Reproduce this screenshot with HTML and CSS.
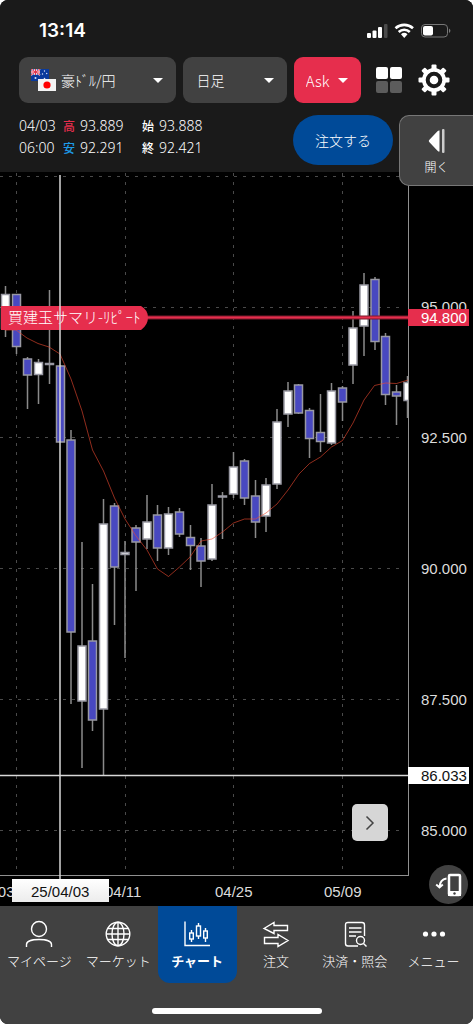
FILE: index.html
```html
<!DOCTYPE html>
<html lang="ja">
<head>
<meta charset="utf-8">
<meta name="viewport" content="width=device-width, initial-scale=1">
<title>チャート</title>
<link rel="stylesheet" href="styles.css">
</head>
<body>
<div class="app">
  <header class="header">
    <div class="status">
      <span class="time">13:14</span>
      <svg class="status-icons" viewBox="0 0 86 16" width="86" height="16" aria-hidden="true">
        <g fill="#fff">
          <rect x="1" y="10" width="4" height="5" rx="1"/>
          <rect x="6.500" y="7.500" width="4" height="7.500" rx="1"/>
          <rect x="12" y="4" width="4" height="11" rx="1"/>
          <rect x="18" y="1" width="3.500" height="14" rx="1" fill="#4b4b4b"/>
        </g>
        <g fill="none" stroke="#fff" stroke-width="2.600">
          <path d="M29.500 5.300a13 13 0 0 1 17.500 0"/>
          <path d="M32.700 9a8 8 0 0 1 11.100 0"/>
        </g>
        <path d="M35 11.200a5 5 0 0 1 6.500 0L38.250 15z" fill="#fff"/>
        <rect x="55.500" y="1.500" width="26" height="12.500" rx="3.500" fill="none" stroke="#777"/>
        <rect x="57" y="3" width="10" height="9.500" rx="2" fill="#fff"/>
        <path d="M83 5.500a2.500 2.500 0 0 1 0 4.500z" fill="#777"/>
      </svg>
    </div>
    <div class="controls">
      <div class="pick pick-pair">
        <svg class="flags" viewBox="0 0 26 23" width="26" height="23" aria-hidden="true">
          <rect width="18" height="12" fill="#0a3a9c"/>
          <path d="M0 0l9 6M9 0L0 6" stroke="#fff" stroke-width="1.600"/>
          <path d="M4.500 0v6M0 3h9" stroke="#fff" stroke-width="2.400"/>
          <path d="M4.500 0v6M0 3h9M0 0l9 6M9 0L0 6" stroke="#e03048" stroke-width="1"/>
          <g fill="#dfe6fa"><circle cx="4.500" cy="9" r="1"/><circle cx="13.500" cy="2" r=".7"/><circle cx="11.500" cy="5" r=".7"/><circle cx="15.700" cy="4.500" r=".7"/><circle cx="13.500" cy="9.500" r=".8"/></g>
          <rect x="7" y="10" width="18" height="12" fill="#f4f4f4"/>
          <circle cx="16" cy="16" r="3.600" fill="#f00"/>
        </svg>
        <select aria-label="通貨ペア"><option>豪ﾄﾞﾙ/円</option></select>
      </div>
      <div class="pick pick-span"><select aria-label="足種"><option>日足</option></select></div>
      <div class="pick pick-side"><select aria-label="レート種別"><option>Ask</option></select></div>
      <button class="icon-btn grid-btn" aria-label="分割表示">
        <svg viewBox="0 0 28 28" width="28" height="28"><g fill="#fff"><rect x="1" y="1" width="12" height="12" rx="2"/><rect x="15" y="1" width="12" height="12" rx="2"/></g><g fill="#5c5c5c"><rect x="1" y="15" width="12" height="12" rx="2"/><rect x="15" y="15" width="12" height="12" rx="2"/></g></svg>
      </button>
      <button class="icon-btn" aria-label="設定">
        <svg viewBox="-16 -16 32 32" width="32" height="32">
          <g fill="#fff">
            <g id="teeth"><rect x="-2.500" y="-15.500" width="5" height="31" rx="1"/><rect x="-15.500" y="-2.500" width="31" height="5" rx="1"/></g>
            <use href="#teeth" transform="rotate(45)"/>
            <circle r="12"/>
          </g>
          <circle r="6.300" fill="none" stroke="#1a1a1a" stroke-width="4"/>
        </svg>
      </button>
    </div>
    <div class="quote">
      <div class="ohlc">
        <span>04/03</span><b class="high">高</b><span>93.889</span><b>始</b><span>93.888</span>
        <span>06:00</span><b class="low">安</b><span>92.291</span><b>終</b><span>92.421</span>
      </div>
      <button class="order">注文する</button>
    </div>
    <button class="drawer">
      <svg viewBox="0 0 18 24" width="18" height="24" aria-hidden="true"><path d="M11.500 1.500v21q-1 .3-2-.8L1.200 13q-.9-1 0-2l8.300-8.700q1-1.100 2-.8z" fill="#fff"/><rect x="14" y="0" width="2.500" height="24" rx="1" fill="#ccc"/></svg>
      <span>開く</span>
    </button>
  </header>

  <main class="chart">
    <svg class="plot" viewBox="0 172 473 734" role="img" aria-label="豪ドル/円 日足チャート">
      <defs>
        <clipPath id="area"><rect x="0" y="172" width="408" height="704"/></clipPath>
        <linearGradient id="tag" x1="0" y1="0" x2="0" y2="1"><stop offset="0" stop-color="#fff"/><stop offset="1" stop-color="#ececec"/></linearGradient>
      </defs>
      <path class="grid" d="M0 176.500H405M0 307.500H405M0 437.500H405M0 568.500H405M0 699.500H405M0 830.500H405M16.500 173V874M125.500 173V874M233.500 173V874M342.500 173V874"/>
      <g clip-path="url(#area)">
        <path class="wick" d="M5.500 286V337M16.500 294V354M27.500 357V409M38.500 359V404M49.500 290V384M60.500 365V442M71 430V704M82 542V768M92.500 584V731M103.500 499V775M114.500 503V625M125 541V658M136 525V591M147 495V549M157.500 505V561M168.500 507V555M179.500 508V537M190.500 525V570M201 538V587M212 484V561M222.500 492V539M233.500 452V498M244.500 459V505M255.500 480V538M266 478V532M277 409V489M288 382V427M298.500 384V414M309.500 408V458M320.500 394V452M331.500 383V445M342.500 386V421M353 311V384M364 273V356M375 277V350M385.500 333V405M396.500 385V425M407.500 376V418"/>
        <g class="up">
          <rect x="1.500" y="294.500" width="8" height="34"/>
          <rect x="34.500" y="362.500" width="8" height="12"/>
          <rect x="78" y="646" width="8" height="55"/>
          <rect x="99.500" y="524" width="8" height="185"/>
          <rect x="121" y="552.500" width="8" height="2"/>
          <rect x="143" y="522" width="8" height="17"/>
          <rect x="164.500" y="514" width="8" height="34"/>
          <rect x="208" y="505" width="8" height="54"/>
          <rect x="218.500" y="496" width="8" height="1"/>
          <rect x="229.500" y="467" width="8" height="27"/>
          <rect x="262" y="485" width="8" height="31"/>
          <rect x="273" y="422" width="8" height="62"/>
          <rect x="284" y="391" width="8" height="23"/>
          <rect x="327.500" y="391" width="8" height="52"/>
          <rect x="349" y="328" width="8" height="37"/>
          <rect x="360" y="285" width="8" height="41"/>
          <rect x="404" y="382.500" width="8" height="18"/>
        </g>
        <g class="down">
          <rect x="12.500" y="294.500" width="8" height="52"/>
          <rect x="23.500" y="359" width="8" height="16"/>
          <rect x="45.500" y="363.500" width="8" height="1"/>
          <rect x="56.500" y="366" width="8" height="76"/>
          <rect x="67" y="440" width="8" height="192"/>
          <rect x="88.500" y="641" width="8" height="79"/>
          <rect x="110.500" y="506" width="8" height="61"/>
          <rect x="132" y="528" width="8" height="14"/>
          <rect x="153.500" y="515" width="8" height="33"/>
          <rect x="175.500" y="512" width="8" height="22"/>
          <rect x="186.500" y="537.500" width="8" height="8"/>
          <rect x="197" y="546" width="8" height="15"/>
          <rect x="240.500" y="461" width="8" height="37"/>
          <rect x="251.500" y="496" width="8" height="26"/>
          <rect x="294.500" y="385" width="8" height="28"/>
          <rect x="305.500" y="410.500" width="8" height="28"/>
          <rect x="316.500" y="432.500" width="8" height="9"/>
          <rect x="338.500" y="388" width="8" height="14"/>
          <rect x="371" y="279.500" width="8" height="62"/>
          <rect x="381.500" y="336.500" width="8" height="58"/>
          <rect x="392.500" y="392" width="8" height="4"/>
        </g>
        <polyline class="average" points="5,330 16,330 27,338 38,343.500 49,347 60,354 71,379 82,411 92.500,450 103.500,471 114.500,498 125,519 136,536 147,550 157.500,569 168.500,576.500 179.500,567 190,557 201,541 212,539 222.500,532 233.500,523 244.500,519 255.500,519 266,513 277,504 288,490 299,474 309.500,463.500 320.500,457 331.500,447 342.500,440.500 353,423 364,400 374.500,385.500 385.500,383 396.500,383.500 408,380"/>
      </g>
      <path class="axis" d="M408.500 172V876M0 875.500H408"/>
      <g class="scale">
        <text x="421" y="312">95.000</text>
        <text x="421" y="443">92.500</text>
        <text x="421" y="574">90.000</text>
        <text x="421" y="705">87.500</text>
        <text x="421" y="836">85.000</text>
        <text x="-23" y="897">04/03</text>
        <text x="105" y="897">04/11</text>
        <text x="215" y="897">04/25</text>
        <text x="324" y="897">05/09</text>
      </g>
      <path d="M145 317.500H408" stroke="#7d1a2c" stroke-width="4"/>
      <path d="M145 317.500H408" stroke="#e62e4d" stroke-width="2"/>
      <path d="M1 306H141Q148 310 148 317.500T141 330H1z" fill="#e62e4d"/>
      <text class="position" x="8" y="323">買建玉サマリ-ﾘﾋﾟｰﾄ</text>
      <rect x="408" y="309" width="61" height="17" fill="#e62e4d"/>
      <text class="tag-light" x="421" y="323">94.800</text>
      <path class="cross" d="M60 175V880M0 775.500H408"/>
      <rect x="408" y="767" width="61" height="17" fill="#fff"/>
      <text class="tag-dark" x="421" y="781">86.033</text>
      <rect x="12" y="879" width="97" height="23" fill="url(#tag)"/>
      <text class="tag-dark" x="31" y="897">25/04/03</text>
    </svg>
    <button class="next" aria-label="次へ"><svg viewBox="0 0 10 16" width="10" height="16"><path d="M1.500 1.500L8 8l-6.500 6.500" fill="none" stroke="#444" stroke-width="1.500"/></svg></button>
    <button class="rotate" aria-label="画面回転">
      <svg viewBox="0 0 28 26" width="28" height="26"><rect x="14" y="3" width="11" height="20" rx="1" fill="none" stroke="#fff" stroke-width="2.500"/><rect x="13" y="19" width="13" height="5" fill="#fff"/><circle cx="19.500" cy="21.500" r="1.200" fill="#414141"/><path d="M11.500 6.500Q5 7.500 4.500 15M1.200 12.500l3.300 3 3.300-3" fill="none" stroke="#fff" stroke-width="2"/></svg>
    </button>
  </main>

  <nav class="nav">
    <div class="tabs">
      <a class="tab" href="#mypage"><svg viewBox="0 0 28 28"><circle cx="14" cy="9" r="7.500"/><path d="M1.500 27v-2.500c0-3 5-5 12.500-5s12.500 2 12.500 5V27"/></svg><span>マイページ</span></a>
      <a class="tab" href="#market"><svg viewBox="0 0 28 28"><circle cx="14" cy="14" r="11.800"/><ellipse cx="14" cy="14" rx="6" ry="11.800"/><path d="M14 2v24M2 14h24M4 8.500h20M4 19.500h20"/></svg><span>マーケット</span></a>
      <a class="tab active" href="#chart"><svg viewBox="0 0 28 28"><path d="M2 1.500V25.500H27M8.500 10v3M8.500 19v3M15.500 3v3M15.500 16v3M22.500 8v3M22.500 18v4"/><rect x="6.700" y="13" width="3.600" height="6"/><rect x="13.500" y="6" width="4" height="10"/><rect x="20.700" y="11" width="3.600" height="7"/></svg><span>チャート</span></a>
      <a class="tab" href="#order"><svg viewBox="0 0 28 28"><path d="M2 8.500L12 2.500V5.500H25.500V10.500H12V13.500zM26 20.500L16 14.500V17.500H2.500V23.500H16V26.500z"/></svg><span>注文</span></a>
      <a class="tab" href="#inquiry"><svg viewBox="0 0 28 28"><path d="M17 26H7q-2.500 0-2.500-2.500V5Q4.500 2.500 7 2.500H21q2.500 0 2.500 2.500V16M8 8H20.500M8 12H20.500M8 16H15"/><circle cx="19.500" cy="20.500" r="4"/><path d="M22.500 23.500l3 3"/></svg><span>決済・照会</span></a>
      <a class="tab" href="#menu"><svg viewBox="0 0 28 28"><g class="dots"><circle cx="5.500" cy="14" r="2.600"/><circle cx="14" cy="14" r="2.600"/><circle cx="22.500" cy="14" r="2.600"/></g></svg><span>メニュー</span></a>
    </div>
    <div class="home"></div>
  </nav>
</div>
</body>
</html>
```
FILE: styles.css
```css
* { box-sizing: border-box; }

body {
  margin: 0;
  background: #fff;
  color: #fff;
  font-family: "Noto Sans CJK JP", "Noto Sans", sans-serif;
  font-weight: 300;
}

button, select {
  border: 0;
  margin: 0;
  padding: 0;
  color: inherit;
  font: inherit;
}

.app {
  display: flex;
  flex-direction: column;
  min-height: 100vh;
  overflow: hidden;
  border-radius: 8px;
  background: #000;
}

.header {
  position: relative;
  z-index: 1;
  padding-bottom: 7px;
  background: #1a1a1a;
}

.status {
  display: flex;
  justify-content: space-between;
  align-items: center;
  height: 57px;
  padding: 4px 21px 0 39px;
}

.time {
  font: 600 19px/24px Inter, sans-serif;
}

.controls {
  display: flex;
  align-items: center;
  gap: 7px;
  padding: 0 23px 0 19px;
}

.pick { position: relative; }
.pick-pair { flex: 157 1 0; }
.pick-span { flex: 103 1 0; }
.pick-side { flex: 67 1 0; }

.pick select {
  display: block;
  appearance: none;
  width: 100%;
  height: 46px;
  padding: 0 28px 0 13px;
  border-radius: 9px;
  background: #414141;
  font-size: 14px;
}

.pick-pair select { padding-left: 42px; }

.pick-side select {
  padding: 0 24px 0 12px;
  background: #e62e4d;
  font-size: 15px;
}

.pick::after {
  content: "";
  position: absolute;
  top: 21px;
  right: 13px;
  border: 5px solid transparent;
  border-top-color: #fff;
  border-bottom: 0;
  pointer-events: none;
}

.flags {
  position: absolute;
  left: 12px;
  top: 12px;
  pointer-events: none;
}

.icon-btn {
  display: flex;
  margin-left: 8px;
  background: none;
}

.grid-btn { margin-left: 7px; }

.quote {
  display: flex;
  justify-content: space-between;
  align-items: flex-start;
  padding: 12px 80px 0 19px;
}

.ohlc {
  display: grid;
  grid-template-columns: 44px 17px 62px 17px 46px;
  font-family: "Noto Sans", "Noto Sans CJK JP", sans-serif;
  font-size: 14px;
  line-height: 22px;
}

.ohlc b {
  font-family: "Noto Sans CJK JP", sans-serif;
  font-size: 12px;
  font-weight: 500;
}

.ohlc .high { color: #e62e4d; }
.ohlc .low { color: #1d9be8; }

.order {
  width: 100px;
  height: 50px;
  border-radius: 25px;
  background: #004a98;
  font-size: 14px;
}

.drawer {
  position: absolute;
  top: 115px;
  right: 0;
  display: flex;
  flex-direction: column;
  align-items: center;
  gap: 5px;
  width: 74px;
  height: 71px;
  padding-top: 13px;
  border: 1px solid #777;
  border-right: 0;
  border-radius: 10px 0 0 10px;
  background: #414141;
  font-size: 12px;
  line-height: 18px;
}

.chart { position: relative; flex: 1; }

.plot {
  display: block;
  width: 100%;
  height: auto;
}

.grid {
  fill: none;
  stroke: #4a4a4a;
  stroke-dasharray: 3 6;
}

.wick {
  stroke: #8a8a8a;
  stroke-width: 1.5px;
}

.up rect, .down rect {
  stroke: #9999a3;
  stroke-width: 1.5px;
}

.up { fill: #fff; }
.down { fill: #4848c0; }

.average {
  fill: none;
  stroke: #f04a30;
  stroke-opacity: 0.6;
}

.axis { stroke: #909090; }

.cross {
  stroke: #d8d8d8;
  stroke-width: 1.5px;
}

.scale, .tag-light, .tag-dark {
  font-family: "Liberation Sans", Arial, sans-serif;
  font-size: 15px;
  font-weight: 400;
}

.scale { fill: #dcdcdc; }
.tag-dark { fill: #111; }
.tag-light, .position { fill: #fff; }
.position { font-size: 15px; }

.next, .rotate {
  position: absolute;
  display: flex;
  align-items: center;
  justify-content: center;
}

.next {
  right: 85px;
  bottom: 65px;
  width: 36px;
  height: 37px;
  border-radius: 5px;
  background: #d6d6d6;
}

.rotate {
  right: 5px;
  bottom: 2px;
  width: 39px;
  height: 39px;
  border-radius: 50%;
  background: #414141;
}

.nav {
  padding-bottom: 10px;
  background: #414141;
}

.tabs {
  display: grid;
  grid-template-columns: repeat(6, 1fr);
}

.tab {
  display: flex;
  flex-direction: column;
  align-items: center;
  gap: 3px;
  height: 77px;
  padding-top: 14px;
  border-radius: 0 0 12px 12px;
  color: #fff;
  font-size: 13px;
  line-height: 20px;
  text-decoration: none;
  white-space: nowrap;
}

.tab svg {
  width: 28px;
  height: 28px;
  fill: none;
  stroke: #fff;
  stroke-width: 1.4px;
}

.dots { fill: #fff; stroke: none; }

.active {
  background: #004a98;
  font-weight: 700;
}

.home {
  width: 170px;
  height: 6px;
  margin: 25px auto 0;
  border-radius: 3px;
  background: #fff;
}
```
